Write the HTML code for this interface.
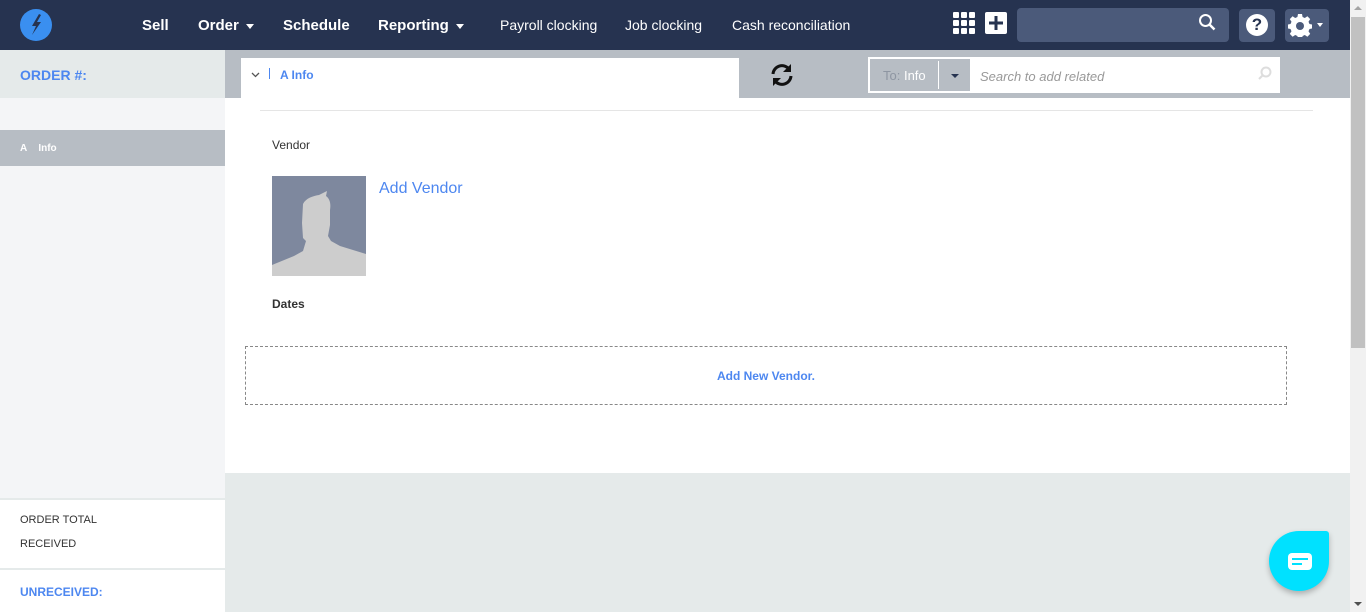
<!DOCTYPE html>
<html><head><style>
*{margin:0;padding:0;box-sizing:border-box}
body{width:1366px;height:612px;overflow:hidden;font-family:"Liberation Sans",sans-serif;position:relative;background:#e5eaea}
.a{position:absolute}
.nav{left:0;top:0;width:1350px;height:50px;background:#263350}
.nv{color:#fff;font-weight:bold;font-size:15px;top:17px}
.nl{color:#fff;font-size:14px;top:17px}
.car{display:inline-block;border-left:4px solid transparent;border-right:4px solid transparent;border-top:5px solid #fff;vertical-align:middle;margin-left:7px}
</style></head><body>
<div class="a nav"></div>
<svg class="a" style="left:20px;top:9px" width="32" height="32" viewBox="0 0 32 32"><circle cx="16" cy="16" r="16" fill="#3a8ff0"/><path d="M19 5 L12 17 L16 17 L12 26 L21 13 L17 13 L21 6Z" fill="#263350"/></svg>
<div class="a nv" style="left:142px">Sell</div>
<div class="a nv" style="left:198px">Order<span class="car"></span></div>
<div class="a nv" style="left:283px">Schedule</div>
<div class="a nv" style="left:378px">Reporting<span class="car"></span></div>
<div class="a nl" style="left:500px">Payroll clocking</div>
<div class="a nl" style="left:625px">Job clocking</div>
<div class="a nl" style="left:732px">Cash reconciliation</div>
<svg class="a" style="left:953px;top:12px" width="22" height="22"><g fill="#fff"><rect x="0" y="0" width="6" height="6" rx="1"/><rect x="8" y="0" width="6" height="6" rx="1"/><rect x="16" y="0" width="6" height="6" rx="1"/><rect x="0" y="8" width="6" height="6" rx="1"/><rect x="8" y="8" width="6" height="6" rx="1"/><rect x="16" y="8" width="6" height="6" rx="1"/><rect x="0" y="16" width="6" height="6" rx="1"/><rect x="8" y="16" width="6" height="6" rx="1"/><rect x="16" y="16" width="6" height="6" rx="1"/></g></svg>
<svg class="a" style="left:985px;top:12px" width="22" height="22"><rect width="22" height="22" rx="2" fill="#fff"/><path d="M11 4v14M4 11h14" stroke="#263350" stroke-width="3"/></svg>
<div class="a" style="left:1017px;top:8px;width:212px;height:34px;background:#4b5a7a;border-radius:4px"></div>
<svg class="a" style="left:1198px;top:13px" width="18" height="18"><circle cx="7.5" cy="7.5" r="5.5" fill="none" stroke="#fff" stroke-width="2"/><path d="M11.5 11.5l5 5" stroke="#fff" stroke-width="2.5"/></svg>
<div class="a" style="left:1239px;top:9px;width:36px;height:33px;background:#4b5a7a;border-radius:4px"></div>
<div class="a" style="left:1246px;top:14px;width:22px;height:22px;border-radius:50%;background:#fff;color:#263350;font-weight:bold;font-size:17px;text-align:center;line-height:22px">?</div>
<div class="a" style="left:1285px;top:9px;width:44px;height:33px;background:#4b5a7a;border-radius:4px"></div>
<svg class="a" style="left:1288px;top:13px" width="24" height="24" viewBox="0 0 24 24"><path fill="#fff" d="M10 1h4l.6 3 2.2 1 2.6-1.7 2.8 2.8L20.5 8.7l1 2.3 2.5.5v4l-2.5.5-1 2.3 1.7 2.6-2.8 2.8-2.6-1.7-2.2 1-.6 2.5h-4l-.6-2.5-2.2-1-2.6 1.7-2.8-2.8 1.7-2.6-1-2.3L0 15.5v-4l2.5-.5 1-2.3L1.8 6.1l2.8-2.8L7.2 5l2.2-1z"/><circle cx="12" cy="13" r="4" fill="#4b5a7a"/></svg>
<span class="a car" style="left:1317px;top:23px;margin:0;border-left-width:3px;border-right-width:3px;border-top-width:4px"></span>
<!-- scrollbar -->
<div class="a" style="left:1350px;top:0;width:16px;height:612px;background:#f1f1f1"></div>
<div class="a" style="left:1351px;top:17px;width:14px;height:331px;background:#c1c1c1"></div>
<div class="a" style="left:1354px;top:6px;border-left:4px solid transparent;border-right:4px solid transparent;border-bottom:4px solid #a3a3a3"></div>
<div class="a" style="left:1354px;top:602px;border-left:4px solid transparent;border-right:4px solid transparent;border-top:4px solid #505050"></div>
<!-- sidebar -->
<div class="a" style="left:0;top:50px;width:225px;height:48px;background:#e5eaea"></div>
<div class="a" style="left:20px;top:67px;color:#4d87f0;font-size:14px;font-weight:bold">ORDER #:</div>
<div class="a" style="left:0;top:98px;width:225px;height:400px;background:#f4f5f7"></div>
<div class="a" style="left:0;top:130px;width:225px;height:36px;background:#b7bdc4"></div>
<div class="a" style="left:20px;top:143px;color:#fff;font-size:10px;font-weight:bold">A&nbsp;&nbsp;&nbsp;&nbsp;Info</div>
<div class="a" style="left:0;top:498px;width:225px;height:2px;background:#e5eaea"></div>
<div class="a" style="left:0;top:500px;width:225px;height:68px;background:#fff"></div>
<div class="a" style="left:20px;top:514px;font-size:11px;color:#333">ORDER TOTAL</div>
<div class="a" style="left:20px;top:538px;font-size:11px;color:#333">RECEIVED</div>
<div class="a" style="left:0;top:568px;width:225px;height:2px;background:#e5eaea"></div>
<div class="a" style="left:0;top:570px;width:225px;height:42px;background:#fff"></div>
<div class="a" style="left:20px;top:585px;font-size:12px;color:#4d87f0;font-weight:bold">UNRECEIVED:</div>
<!-- main -->
<div class="a" style="left:225px;top:50px;width:1125px;height:48px;background:#b7bdc4"></div>
<div class="a" style="left:225px;top:98px;width:1125px;height:375px;background:#fff"></div>
<div class="a" style="left:241px;top:58px;width:498px;height:40px;background:#fff"></div>
<svg class="a" style="left:251px;top:72px" width="9" height="6"><path d="M1 1l3.5 3.5L8 1" fill="none" stroke="#555" stroke-width="1.3"/></svg>
<div class="a" style="left:269px;top:68px;width:1px;height:11px;background:#4d87f0"></div>
<div class="a" style="left:280px;top:68px;color:#4d87f0;font-size:12px;font-weight:bold">A Info</div>
<svg class="a" style="left:769px;top:62px" width="26" height="26" viewBox="0 0 26 26"><path d="M4 12a9 9 0 0 1 16-5" fill="none" stroke="#111" stroke-width="3"/><path d="M22 2v8h-8z" fill="#111"/><path d="M22 14a9 9 0 0 1-16 5" fill="none" stroke="#111" stroke-width="3"/><path d="M4 24v-8h8z" fill="#111"/></svg>
<div class="a" style="left:868px;top:57px;width:412px;height:36px;background:#fff"></div>
<div class="a" style="left:870px;top:59px;width:100px;height:32px;background:#b7bdc4"></div>
<div class="a" style="left:938px;top:61px;width:1px;height:28px;background:#fff"></div>
<div class="a" style="left:883px;top:68px;font-size:13px;color:#fff"><span style="color:#8e96a2">To:</span> Info</div>
<div class="a" style="left:951px;top:74px;border-left:4px solid transparent;border-right:4px solid transparent;border-top:4px solid #263350"></div>
<div class="a" style="left:980px;top:69px;font-size:13px;color:#999;font-style:italic">Search to add related</div>
<svg class="a" style="left:1258px;top:66px" width="14" height="14"><circle cx="8" cy="6" r="4.5" fill="none" stroke="#ddd" stroke-width="2"/><path d="M5 9l-4 4" stroke="#ddd" stroke-width="2"/></svg>
<div class="a" style="left:260px;top:110px;width:1053px;height:1px;background:#e5e5e5"></div>
<div class="a" style="left:272px;top:138px;font-size:12px;color:#333">Vendor</div>
<svg class="a" style="left:272px;top:176px" width="94" height="100" viewBox="0 0 94 100"><rect width="94" height="100" fill="#7e889e"/><path d="M0 100V89l22-9 9-5 3-10-3-3-1-15 1-19c3-6 10-8 16-9l8-4-1 5c4 3 5 8 4 14v15l-2 11 3 5 9 5 26 8V100z" fill="#cdcdcd"/></svg>
<div class="a" style="left:379px;top:180px;font-size:16px;color:#4d87f0">Add Vendor</div>
<div class="a" style="left:272px;top:297px;font-size:12px;color:#333;font-weight:bold">Dates</div>
<div class="a" style="left:245px;top:346px;width:1042px;height:59px;border:1px dashed #888"></div>
<div class="a" style="left:245px;top:369px;width:1042px;text-align:center;font-size:12px;color:#4d87f0;font-weight:bold">Add New Vendor.</div>
<!-- chat -->
<div class="a" style="left:1269px;top:531px;width:60px;height:60px;background:#00e1ff;border-radius:30px 3px 30px 30px;box-shadow:0 3px 6px rgba(0,0,0,.25)"></div>
<div class="a" style="left:1288px;top:553px;width:24px;height:17px;background:#fff;border-radius:4px"></div>
<div class="a" style="left:1292px;top:558px;width:16px;height:2px;background:#00e1ff"></div>
<div class="a" style="left:1292px;top:563px;width:10px;height:2px;background:#00e1ff"></div>
</body></html>
